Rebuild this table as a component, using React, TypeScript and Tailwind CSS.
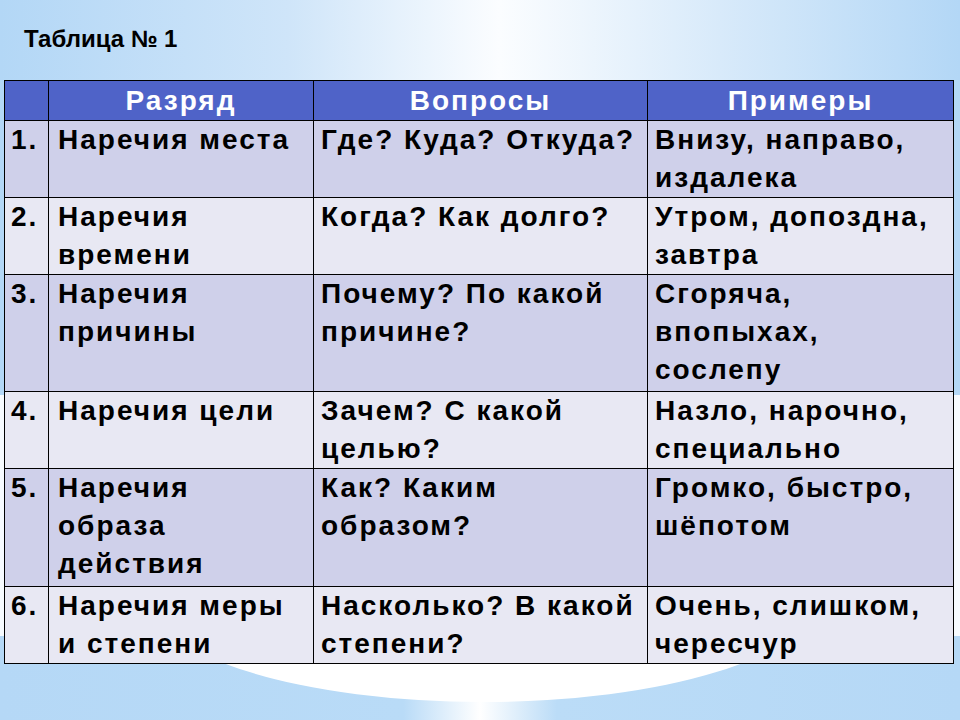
import React from "react";

type Row = { n: string; a: string[]; b: string[]; c: string[]; h: string; bg: string };

const rows: Row[] = [
  { n: "1.", a: ["Наречия места"], b: ["Где? Куда? Откуда?"], c: ["Внизу, направо,", "издалека"], h: "h-[77px]", bg: "bg-[#cfd0ea]" },
  { n: "2.", a: ["Наречия", "времени"], b: ["Когда? Как долго?"], c: ["Утром, допоздна,", "завтра"], h: "h-[77px]", bg: "bg-[#e8e8f3]" },
  { n: "3.", a: ["Наречия", "причины"], b: ["Почему? По какой", "причине?"], c: ["Сгоряча,", "впопыхах,", "сослепу"], h: "h-[117px]", bg: "bg-[#cfd0ea]" },
  { n: "4.", a: ["Наречия цели"], b: ["Зачем? С какой", "целью?"], c: ["Назло, нарочно,", "специально"], h: "h-[77px]", bg: "bg-[#e8e8f3]" },
  { n: "5.", a: ["Наречия", "образа", "действия"], b: ["Как? Каким", "образом?"], c: ["Громко, быстро,", "шёпотом"], h: "h-[118px]", bg: "bg-[#cfd0ea]" },
  { n: "6.", a: ["Наречия меры", "и степени"], b: ["Насколько? В какой", "степени?"], c: ["Очень, слишком,", "чересчур"], h: "h-[76px]", bg: "bg-[#e8e8f3]" },
];

function Lines({ lines }: { lines: string[] }) {
  return (
    <>
      {lines.map((l, i) => (
        <div key={i} className="whitespace-nowrap">
          {l}
        </div>
      ))}
    </>
  );
}

function Background() {
  return (
    <svg className="absolute inset-0" width="960" height="720" viewBox="0 0 960 720">
      <defs>
        <linearGradient id="sky" x1="0" y1="0" x2="1" y2="0">
          <stop offset="0" stopColor="#b3d7f6" />
          <stop offset="0.3" stopColor="#cfe5f9" />
          <stop offset="0.52" stopColor="#fbfdff" />
          <stop offset="0.75" stopColor="#d8eafa" />
          <stop offset="1" stopColor="#b3d7f6" />
        </linearGradient>
        <linearGradient id="low" x1="0" y1="0" x2="1" y2="0">
          <stop offset="0" stopColor="#b5d8f6" />
          <stop offset="0.42" stopColor="#b9dbf7" />
          <stop offset="0.5" stopColor="#ffffff" />
          <stop offset="0.58" stopColor="#bbdcf7" />
          <stop offset="1" stopColor="#b5d8f6" />
        </linearGradient>
      </defs>
      <rect x="0" y="0" width="960" height="720" fill="url(#sky)" />
      <rect x="0" y="395" width="960" height="245" fill="#f7fbff" />
      <rect x="0" y="636" width="960" height="84" fill="url(#low)" />
      <ellipse cx="483" cy="600" rx="330" ry="102" fill="#ffffff" />
    </svg>
  );
}

export default function App() {
  return (
    <div className="relative w-[960px] h-[720px] overflow-hidden font-['Liberation_Sans',Arial,sans-serif]">
      <Background />
      <div className="relative flex flex-col pt-[23px]">
        <div className="pl-[24px] h-[31px] text-[24px] leading-[31px] font-bold text-black">
          Таблица № 1
        </div>
        <table className="mt-[26px] ml-[4px] w-[949px] table-fixed border-collapse text-[28px] leading-[38px] font-bold tracking-[2px] text-black">
          <colgroup>
            <col className="w-[44px]" />
            <col className="w-[265px]" />
            <col className="w-[334px]" />
            <col className="w-[306px]" />
          </colgroup>
          <thead>
            <tr className="h-[40px] bg-[#4f63c8] text-white">
              <th className="border-[1.5px] border-black p-0"></th>
              <th className="border-[1.5px] border-black p-0 text-center font-bold">Разряд</th>
              <th className="border-[1.5px] border-black p-0 text-center font-bold">Вопросы</th>
              <th className="border-[1.5px] border-black p-0 text-center font-bold">Примеры</th>
            </tr>
          </thead>
          <tbody>
            {rows.map((r) => (
              <tr key={r.n} className={`${r.h} ${r.bg}`}>
                <td className="border-[1.5px] border-black align-top pl-[6px] pt-0 pb-0">{r.n}</td>
                <td className="border-[1.5px] border-black align-top pl-[9px] pt-0 pb-0">
                  <Lines lines={r.a} />
                </td>
                <td className="border-[1.5px] border-black align-top pl-[7px] pt-0 pb-0">
                  <Lines lines={r.b} />
                </td>
                <td className="border-[1.5px] border-black align-top pl-[7px] pt-0 pb-0">
                  <Lines lines={r.c} />
                </td>
              </tr>
            ))}
          </tbody>
        </table>
      </div>
    </div>
  );
}
